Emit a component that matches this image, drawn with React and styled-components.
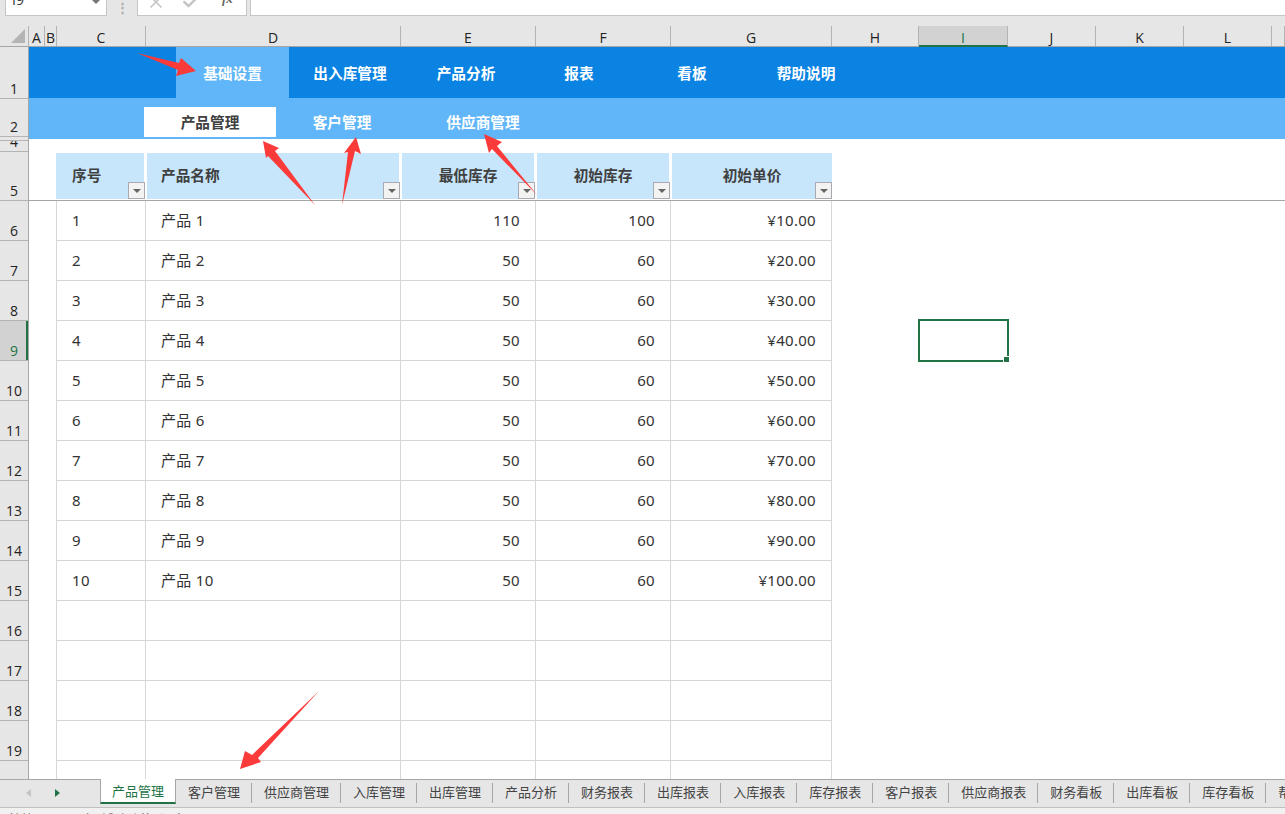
import React from 'react';
import styled, { createGlobalStyle } from 'styled-components';
import { X, Check } from 'lucide-react';

const CJK = '"Noto Sans CJK SC", "Noto Sans", sans-serif';
const DIGITS = '"Noto Sans", "Noto Sans CJK SC", sans-serif';
const LATIN = '"Open Sans", "Liberation Sans", sans-serif';
const GREEN = '#217346';

const GlobalStyle = createGlobalStyle`
	html, body {
		margin: 0;
		padding: 0;
		background: #fff;
		overflow: hidden;
	}
	* {
		box-sizing: border-box;
	}
`;

const Page = styled.div`
	position: relative;
	display: flex;
	flex-direction: column;
	width: 1285px;
	height: 814px;
	overflow: hidden;
	background: #fff;
	font-family: ${CJK};
`;

/* formula bar, cut off by the top of the picture */
const FormulaBar = styled.div`
	display: flex;
	flex: none;
	height: 26px;
	padding-left: 5px;
	background: #e6e6e6;
`;

const NameBox = styled.div`
	display: flex;
	justify-content: space-between;
	width: 102px;
	height: 16px;
	padding: 0 6px;
	background: #fff;
	border: 1px solid #c6c6c6;
	border-top: 0;
	overflow: hidden;
	font-family: ${LATIN};
	font-size: 14px;
	line-height: 14px;
	color: #333;
	span {
		margin-top: -7px;
	}
`;

const NameCaret = styled.i`
	width: 0;
	height: 0;
	border-left: 4px solid transparent;
	border-right: 4px solid transparent;
	border-top: 4px solid #777;
`;

const Dots = styled.div`
	width: 30px;
	height: 16px;
	padding-left: 9px;
	color: #aaa;
	font-family: ${LATIN};
	font-size: 13px;
	line-height: 15px;
	font-weight: 700;
`;

const FuncBox = styled.div`
	display: flex;
	align-items: flex-start;
	gap: 15px;
	width: 110px;
	height: 16px;
	padding-left: 8px;
	background: #fff;
	border: 1px solid #c6c6c6;
	border-top: 0;
	overflow: hidden;
	color: #c6c6c6;
	svg {
		flex: none;
		margin-top: -8px;
	}
`;

const FxLabel = styled.span`
	margin: -9px 0 0 6px;
	font-family: "Liberation Serif", serif;
	font-style: italic;
	font-weight: 700;
	font-size: 13px;
	line-height: 16px;
	color: #666;
`;

const FormulaInput = styled.div`
	flex: 1;
	height: 16px;
	margin-left: 3px;
	background: #fff;
	border: 1px solid #c6c6c6;
	border-top: 0;
	border-right: 0;
`;

/* column letters */
const ColumnBar = styled.div`
	display: flex;
	flex: none;
	height: 21px;
	background: #e6e6e6;
	border-bottom: 1px solid #a6a6a6;
`;

const Corner = styled.div`
	display: flex;
	flex: none;
	align-items: flex-end;
	justify-content: flex-end;
	width: 29px;
	padding: 0 3px 3px 0;
	border-right: 1px solid #b4b4b4;
`;

const ColumnGrid = styled.div`
	display: grid;
	flex: 1;
	grid-template-columns: 16px 12px 89px 255px 135px 135px 161px 87px 89px 88px 88px 88px 1fr;
`;

const ColumnLabel = styled.div`
	height: ${p => (p.$selected ? '21px' : '20px')};
	padding-top: 2px;
	text-align: center;
	font-family: ${LATIN};
	font-size: 14px;
	line-height: 19px;
	color: ${p => (p.$selected ? GREEN : '#222')};
	background: ${p => (p.$selected ? '#d2d2d2' : 'transparent')};
	border-right: 1px solid #b4b4b4;
	border-bottom: ${p => (p.$selected ? `2px solid ${GREEN}` : '0')};
`;

const Body = styled.div`
	display: flex;
	flex: none;
	height: 732px;
`;

/* row numbers */
const RowBar = styled.div`
	flex: none;
	width: 29px;
	background: #e6e6e6;
	border-right: 1px solid #a6a6a6;
	overflow: hidden;
`;

const RowLabel = styled.div`
	display: flex;
	align-items: flex-end;
	justify-content: center;
	height: ${p => p.$h}px;
	overflow: hidden;
	font-family: ${LATIN};
	font-size: 14px;
	line-height: 18px;
	color: ${p => (p.$selected ? GREEN : '#222')};
	background: ${p => (p.$selected ? '#d2d2d2' : 'transparent')};
	border-bottom: 1px solid #b4b4b4;
	box-shadow: ${p => (p.$selected ? `inset -2px 0 0 ${GREEN}` : 'none')};
`;

/* the worksheet */
const Sheet = styled.div`
	display: grid;
	flex: 1;
	min-width: 0;
	grid-template-columns: 16px 10px 91px 255px 135px 135px 161px 87px 89px 88px 88px 88px 1fr;
	grid-template-rows: 51px 41px 12px 50px repeat(15, 40px);
	overflow: hidden;
`;

const MenuBar = styled.nav`
	display: flex;
	grid-column: 1 / -1;
	grid-row: 1;
	padding-left: 147px;
	background: #0a83e3;
`;

const MenuItem = styled.div`
	width: ${p => p.$w}px;
	text-align: center;
	font-size: 14.67px;
	font-weight: 700;
	line-height: 51px;
	color: #fff;
	background: ${p => (p.$active ? '#60b6f8' : 'transparent')};
`;

const SubBar = styled.nav`
	display: flex;
	grid-column: 1 / -1;
	grid-row: 2;
	padding: 9px 0 2px 115px;
	background: #60b6f8;
`;

const SubItem = styled.div`
	width: ${p => p.$w}px;
	text-align: center;
	font-size: 14.67px;
	font-weight: 700;
	line-height: 30px;
	color: ${p => (p.$active ? '#404040' : '#fff')};
	background: ${p => (p.$active ? '#fff' : 'transparent')};
`;

const TableRow = styled.div`
	display: grid;
	grid-column: 3 / 8;
	grid-row: ${p => p.$row};
	grid-template-columns: subgrid;
`;

const HeadCell = styled.div`
	position: relative;
	margin: 2px ${p => (p.$last ? '0' : '2px')} 2px 1px;
	padding-left: ${p => p.$pad || 0}px;
	text-align: ${p => (p.$pad ? 'left' : 'center')};
	font-size: 14.67px;
	font-weight: 700;
	line-height: 44px;
	color: #404040;
	background: #c7e6fc;
`;

const FilterButton = styled.span`
	position: absolute;
	right: ${p => (p.$last ? '0' : '-1px')};
	bottom: 0;
	display: flex;
	align-items: center;
	justify-content: center;
	width: 17px;
	height: 17px;
	background: #f3f3f3;
	border: 1px solid #a9a9b2;
	&::after {
		content: '';
		border-left: 4px solid transparent;
		border-right: 4px solid transparent;
		border-top: 4px solid #666;
	}
`;

const FreezeLine = styled.div`
	grid-column: 1 / -1;
	grid-row: 4;
	align-self: end;
	height: 1px;
	background: #a6a6a6;
`;

const DataCell = styled.div`
	padding: 0 ${p => (p.$right ? '15px' : '0')} 0 ${p => (p.$right ? '0' : '15px')};
	margin-left: ${p => (p.$first ? '1px' : '0')};
	text-align: ${p => (p.$right ? 'right' : 'left')};
	font-family: ${DIGITS};
	font-size: 15px;
	letter-spacing: 0.3px;
	line-height: 38px;
	color: #333;
	border-right: 1px solid #d6d6d6;
	border-bottom: 1px solid #d6d6d6;
	border-left: ${p => (p.$first ? '1px solid #d6d6d6' : '0')};
`;

const Selection = styled.div`
	position: relative;
	grid-column: 9;
	grid-row: 8;
	margin: -2px -1px -1px -1px;
	border: 2px solid ${GREEN};
`;

const FillHandle = styled.span`
	position: absolute;
	right: -3px;
	bottom: -3px;
	width: 7px;
	height: 7px;
	background: ${GREEN};
	border: 1px solid #fff;
`;

/* sheet tabs */
const TabBar = styled.div`
	display: flex;
	flex: none;
	height: 29px;
	background: #e6e6e6;
	border-top: 1px solid #a6a6a6;
	border-bottom: 1px solid #c0c0c0;
`;

const TabNav = styled.div`
	display: flex;
	flex: none;
	align-items: center;
	gap: 24px;
	width: 100px;
	height: 22px;
	margin-top: 2px;
	padding-left: 26px;
`;

const NavArrow = styled.i`
	width: 0;
	height: 0;
	border-top: 4px solid transparent;
	border-bottom: 4px solid transparent;
	${p => (p.$left
		? 'border-right: 5px solid #c4c4c4;'
		: `border-left: 5px solid ${GREEN};`)}
`;

const Tab = styled.div`
	flex: none;
	white-space: nowrap;
	font-size: 13px;
	${p => (p.$active
		? `
		height: 25px;
		margin-top: -1px;
		padding: 2px 11px 0;
		line-height: 20px;
		color: ${GREEN};
		background: #fff;
		border-left: 1px solid #a6a6a6;
		border-right: 1px solid #a6a6a6;
		border-bottom: 2px solid ${GREEN};
		`
		: `
		height: 20px;
		margin-top: 3px;
		padding: 0 11px 0 12px;
		line-height: 17px;
		color: #444;
		border-right: 1px solid #a6a6a6;
		`)}
`;

const StatusBar = styled.div`
	display: flex;
	flex: 1;
	min-height: 0;
	padding: 2px 0 0 8px;
	background: #f1f1f1;
	overflow: hidden;
	font-size: 13px;
	line-height: 18px;
	color: #555;
`;

const StatusItem = styled.span`
	flex: none;
	margin-right: ${p => p.$gap}px;
`;

const Arrows = styled.svg`
	position: absolute;
	inset: 0;
	pointer-events: none;
`;

const columnLetters = ['A', 'B', 'C', 'D', 'E', 'F', 'G', 'H', 'I', 'J', 'K', 'L', ''];

const rowLabels = [
	{ label: '1', h: 52 },
	{ label: '2', h: 38 },
	{ label: '', h: 4 },
	{ label: '4', h: 11 },
	{ label: '5', h: 49 },
	...[6, 7, 8, 9, 10, 11, 12, 13, 14, 15, 16, 17, 18, 19, 20].map(n => ({ label: String(n), h: 40 })),
];

const menu = [
	{ text: '基础设置', w: 113, active: true },
	{ text: '出入库管理', w: 122 },
	{ text: '产品分析', w: 110 },
	{ text: '报表', w: 116 },
	{ text: '看板', w: 110 },
	{ text: '帮助说明', w: 118 },
];

const subMenu = [
	{ text: '产品管理', w: 132, active: true },
	{ text: '客户管理', w: 132 },
	{ text: '供应商管理', w: 150 },
];

const products = [
	[1, '产品 1', 110, 100, '¥10.00'],
	[2, '产品 2', 50, 60, '¥20.00'],
	[3, '产品 3', 50, 60, '¥30.00'],
	[4, '产品 4', 50, 60, '¥40.00'],
	[5, '产品 5', 50, 60, '¥50.00'],
	[6, '产品 6', 50, 60, '¥60.00'],
	[7, '产品 7', 50, 60, '¥70.00'],
	[8, '产品 8', 50, 60, '¥80.00'],
	[9, '产品 9', 50, 60, '¥90.00'],
	[10, '产品 10', 50, 60, '¥100.00'],
	['', '', '', '', ''],
	['', '', '', '', ''],
	['', '', '', '', ''],
	['', '', '', '', ''],
	['', '', '', '', ''],
];

const tabs = ['产品管理', '客户管理', '供应商管理', '入库管理', '出库管理', '产品分析', '财务报表', '出库报表', '入库报表', '库存报表', '客户报表', '供应商报表', '财务看板', '出库看板', '库存看板', '帮助说明'];

const arrowShapes = [
	'137,53 179,63 181,58 196,71 176,76 178,70',
	'263,141 279,148 275,151 315,205 268,156 266,158',
	'356,137 361,154 355,151 342,205 348,152 344,153',
	'484,134 502,142 497,146 537,195 492,149 489,153',
	'240,769 245,751 252,755 319,691 258,758 261,762',
];

const App = () => {
	return (
		<Page>
			<GlobalStyle />
			<FormulaBar>
				<NameBox><span>I9</span><NameCaret /></NameBox>
				<Dots>⋮</Dots>
				<FuncBox>
					<X size={20} strokeWidth={2} />
					<Check size={20} strokeWidth={3} />
					<FxLabel>fx</FxLabel>
				</FuncBox>
				<FormulaInput />
			</FormulaBar>
			<ColumnBar>
				<Corner>
					<svg width="14" height="14" viewBox="0 0 14 14"><polygon points="14,0 14,14 0,14" fill="#b4b4b4" /></svg>
				</Corner>
				<ColumnGrid>
					{columnLetters.map((letter, i) => (
						<ColumnLabel key={i} $selected={letter === 'I'}>{letter}</ColumnLabel>
					))}
				</ColumnGrid>
			</ColumnBar>
			<Body>
				<RowBar>
					{rowLabels.map((row, i) => (
						<RowLabel key={i} $h={row.h} $selected={row.label === '9'}>{row.label}</RowLabel>
					))}
				</RowBar>
				<Sheet>
					<MenuBar>
						{menu.map(item => (
							<MenuItem key={item.text} $w={item.w} $active={item.active}>{item.text}</MenuItem>
						))}
					</MenuBar>
					<SubBar>
						{subMenu.map(item => (
							<SubItem key={item.text} $w={item.w} $active={item.active}>{item.text}</SubItem>
						))}
					</SubBar>
					<FreezeLine />
					<TableRow $row={4}>
						<HeadCell $pad={16}>序号<FilterButton /></HeadCell>
						<HeadCell $pad={14}>产品名称<FilterButton /></HeadCell>
						<HeadCell>最低库存<FilterButton /></HeadCell>
						<HeadCell>初始库存<FilterButton /></HeadCell>
						<HeadCell $last>初始单价<FilterButton $last /></HeadCell>
					</TableRow>
					{products.map((data, i) => (
						<TableRow key={i} $row={i + 5}>
							<DataCell $first>{data[0]}</DataCell>
							<DataCell>{data[1]}</DataCell>
							<DataCell $right>{data[2]}</DataCell>
							<DataCell $right>{data[3]}</DataCell>
							<DataCell $right>{data[4]}</DataCell>
						</TableRow>
					))}
					<Selection><FillHandle /></Selection>
				</Sheet>
			</Body>
			<TabBar>
				<TabNav>
					<NavArrow $left />
					<NavArrow />
				</TabNav>
				{tabs.map((tab, i) => (
					<Tab key={tab} $active={i === 0}>{tab}</Tab>
				))}
			</TabBar>
			<StatusBar>
				<StatusItem $gap={16}>就绪</StatusItem>
				<StatusItem $gap={18}>▣</StatusItem>
				<StatusItem $gap={7}>小</StatusItem>
				<StatusItem $gap={0}>辅助功能: 调查</StatusItem>
			</StatusBar>
			<Arrows width="1285" height="814" viewBox="0 0 1285 814">
				{arrowShapes.map(points => (
					<polygon key={points} points={points} fill="#fb3a3a" />
				))}
			</Arrows>
		</Page>
	);
};

export default App;
